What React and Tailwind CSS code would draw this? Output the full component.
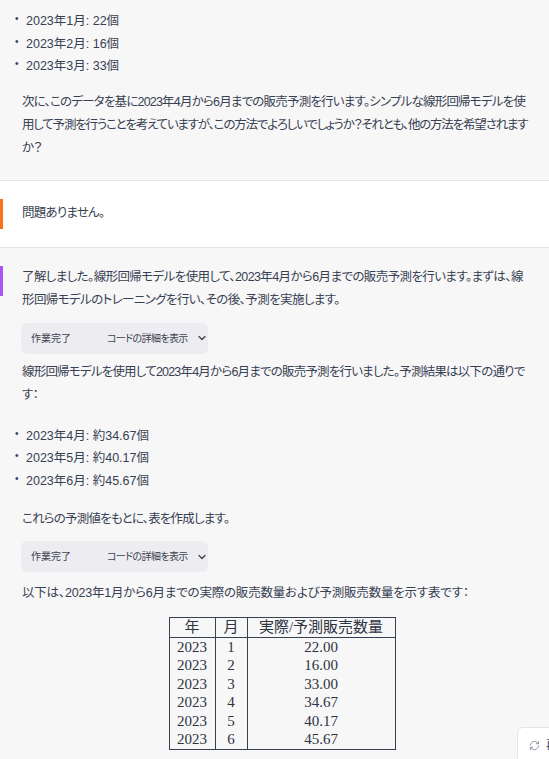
import React from "react";
import { ChevronDown, RefreshCw } from "lucide-react";

const font = { fontFamily: '"Liberation Sans", "Noto Sans CJK JP", sans-serif', fontFeatureSettings: '"palt"' };

const Bullets = ({ items }) => (
  <ul className="pl-[15px]">
    {items.map((t, i) => (
      <li key={i} className="flex items-start leading-[22.5px]">
        <span className="w-[11px] text-[10px] leading-[18px]">•</span>
        <span>{t}</span>
      </li>
    ))}
  </ul>
);

const Para = ({ lines, className = "tracking-[-0.8px]" }) => (
  <p className={`pl-[22px] leading-[23px] whitespace-nowrap ${className}`}>
    {lines.map((l, i) => (
      <React.Fragment key={i}>
        {l}
        {i < lines.length - 1 && <br />}
      </React.Fragment>
    ))}
  </p>
);

const WorkDone = () => (
  <div className="ml-[21px] w-[187px] h-[31px] rounded-md bg-[#ececf1] flex items-center text-[10px] text-[#40414f] whitespace-nowrap">
    <span className="ml-[10px] w-[76px]">作業完了</span>
    <span className="tracking-[-0.6px]">コードの詳細を表示</span>
    <ChevronDown className="ml-[8px] w-[12px] h-[12px]" strokeWidth={2.5} />
  </div>
);

const rows = [
  ["2023", "1", "22.00"],
  ["2023", "2", "16.00"],
  ["2023", "3", "33.00"],
  ["2023", "4", "34.67"],
  ["2023", "5", "40.17"],
  ["2023", "6", "45.67"],
];

export default function App() {
  return (
    <div className="relative w-[549px] h-[759px] overflow-hidden bg-[#f7f7f8] text-[12.5px] text-[#374151]" style={font}>
      <section className="pt-[10px] pb-[20px]">
        <Bullets items={["2023年1月: 22個", "2023年2月: 16個", "2023年3月: 33個"]} />
        <Para
          className="mt-[13px] tracking-[-0.8px]"
          lines={[
            "次に、このデータを基に2023年4月から6月までの販売予測を行います。シンプルな線形回帰モデルを使",
            <span className="tracking-[-1.2px]">用して予測を行うことを考えていますが、この方法でよろしいでしょうか？それとも、他の方法を希望されます</span>,
            "か？",
          ]}
        />
      </section>

      <section className="relative bg-white border-y border-[#e5e5e5] h-[68px] flex items-center">
        <div className="absolute left-0 top-[18px] w-[3px] h-[30px] bg-[#f97316]" />
        <p className="pl-[22px] tracking-[-0.8px]">問題ありません。</p>
      </section>

      <section className="relative pt-[18px]">
        <div className="absolute left-0 top-[18px] w-[3px] h-[30px] bg-[#a855f7]" />
        <Para
          className="tracking-[-0.6px]"
          lines={[
            "了解しました。線形回帰モデルを使用して、2023年4月から6月までの販売予測を行います。まずは、線",
            "形回帰モデルのトレーニングを行い、その後、予測を実施します。",
          ]}
        />
        <div className="mt-[11px]">
          <WorkDone />
        </div>
        <Para
          className="mt-[7px] tracking-[-0.8px]"
          lines={[
            "線形回帰モデルを使用して2023年4月から6月までの販売予測を行いました。予測結果は以下の通りで",
            "す：",
          ]}
        />
        <div className="mt-[18px]">
          <Bullets items={["2023年4月: 約34.67個", "2023年5月: 約40.17個", "2023年6月: 約45.67個"]} />
        </div>
        <Para className="mt-[16px] tracking-[-0.8px]" lines={["これらの予測値をもとに、表を作成します。"]} />
        <div className="mt-[10px]">
          <WorkDone />
        </div>
        <Para
          className="mt-[10px] tracking-[-0.2px]"
          lines={["以下は、2023年1月から6月までの実際の販売数量および予測販売数量を示す表です："]}
        />
        <div className="mt-[12px] flex justify-center pl-[15px]">
          <table
            className="border border-[#374151] text-[15px] text-[#2d333f] leading-[18.5px]"
            style={{ fontFamily: '"Liberation Serif", "Noto Sans CJK JP", serif' }}
          >
            <thead>
              <tr className="border-b border-[#374151]">
                <th className="font-normal w-[46px] border-r border-[#374151]">年</th>
                <th className="font-normal w-[32px] border-r border-[#374151]">月</th>
                <th className="font-normal w-[148px]">実際/予測販売数量</th>
              </tr>
            </thead>
            <tbody>
              {rows.map((r, i) => (
                <tr key={i}>
                  <td className="text-center border-r border-[#374151]">{r[0]}</td>
                  <td className="text-center border-r border-[#374151]">{r[1]}</td>
                  <td className="text-center">{r[2]}</td>
                </tr>
              ))}
            </tbody>
          </table>
        </div>
      </section>

      <button className="absolute left-[517px] top-[727px] h-[36px] w-[80px] rounded-md border border-[#e5e5e5] bg-white flex items-center gap-[6px] pl-[11px] text-[12px] text-[#40414f]">
        <RefreshCw className="w-[11px] h-[11px] text-[#8e8ea0]" />
        <span>再生成</span>
      </button>
    </div>
  );
}
